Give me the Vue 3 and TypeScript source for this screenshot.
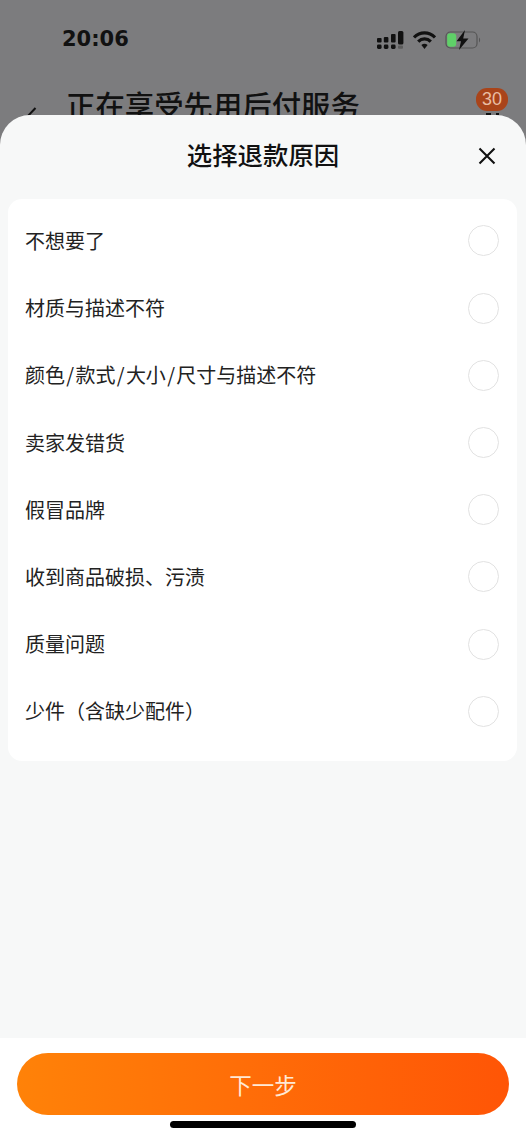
<script setup lang="ts">
const reasons: string[] = [
  '不想要了',
  '材质与描述不符',
  '颜色/款式/大小/尺寸与描述不符',
  '卖家发错货',
  '假冒品牌',
  '收到商品破损、污渍',
  '质量问题',
  '少件（含缺少配件）',
]
</script>

<template>
  <div class="page">
    <div class="behind">
      <div class="status">
        <span class="time">20:06</span>
        <div class="status-icons">
          <svg class="signal" width="27" height="18" viewBox="0 0 27 18">
            <g fill="#111">
              <rect x="0" y="7" width="4.6" height="4.4" rx="1" />
              <rect x="0" y="13.6" width="4.6" height="4.4" rx="1.4" />
              <rect x="6.8" y="6" width="4.6" height="5.4" rx="1" />
              <rect x="6.8" y="13.6" width="4.6" height="4.4" rx="1.4" />
              <rect x="14" y="3" width="4.6" height="8.4" rx="1" />
              <rect x="14" y="13.6" width="4.6" height="4.4" rx="1.4" />
              <rect x="21" y="0" width="5.4" height="13.6" rx="1.5" />
            </g>
            <rect x="21" y="14.6" width="5" height="3.2" rx="1" fill="#5c5c5c" />
          </svg>
          <svg class="wifi" width="23" height="18" viewBox="0 0 23 18">
            <path d="M1 6.4 C7 0.4 16 0.4 22 6.4" fill="none" stroke="#111" stroke-width="3.2" />
            <path d="M5.2 10.6 C8.8 7 14.2 7 17.8 10.6" fill="none" stroke="#111" stroke-width="3.2" />
            <path d="M8.4 14 C10.4 12.4 12.6 12.4 14.6 14 L11.5 18 Z" fill="#111" />
          </svg>
          <svg class="battery" width="36" height="20" viewBox="0 0 36 20">
            <rect x="1" y="2" width="31" height="16" rx="4.5" fill="none" stroke="#555" stroke-width="1.2" />
            <rect x="2.2" y="3.2" width="9" height="13.6" rx="3" fill="#5fd068" />
            <path d="M34 7.5 C35.4 8.2 35.4 11.8 34 12.5 Z" fill="#555" />
            <path d="M20 0 L11.5 11.2 L16 11.2 L14 20 L23.5 8.4 L18.2 8.4 Z" fill="#111" />
          </svg>
        </div>
      </div>
      <div class="nav">
        <svg class="back" width="14" height="24" viewBox="0 0 14 24">
          <path d="M11.5 2 L2 12 L11.5 22" fill="none" stroke="#111" stroke-width="2" />
        </svg>
        <span class="nav-title">正在享受先用后付服务</span>
        <span class="badge">30</span>
        <span class="badge-icon"></span>
      </div>
    </div>

    <section class="sheet">
      <header class="sheet-head">
        <h1 class="sheet-title">选择退款原因</h1>
        <svg class="close" width="20" height="20" viewBox="0 0 20 20">
          <path d="M2.5 2.5 L17.5 17.5 M17.5 2.5 L2.5 17.5" fill="none" stroke="#111" stroke-width="2.1" />
        </svg>
      </header>

      <div class="sheet-body">
        <ul class="card">
          <li v-for="reason in reasons" :key="reason" class="row">
            <span class="label">
              <template v-for="(part, i) in reason.split('/')" :key="i"><span v-if="i" class="slash">/</span>{{ part }}</template>
            </span>
            <span class="radio"></span>
          </li>
        </ul>
      </div>

      <footer class="footer">
        <button class="next" type="button">下一步</button>
        <div class="home"></div>
      </footer>
    </section>
  </div>
</template>

<style>
html,
body {
  margin: 0;
  padding: 0;
  background: #7c7c7e;
}
</style>

<style scoped>
.page {
  width: 526px;
  height: 1139px;
  display: flex;
  flex-direction: column;
  background: #7c7c7e;
  overflow: hidden;
  font-family: "Noto Sans CJK SC", "Liberation Sans", sans-serif;
}

.behind {
  height: 115px;
  flex: none;
  overflow: hidden;
}

.status {
  height: 78px;
  display: flex;
  justify-content: space-between;
  align-items: flex-start;
  padding: 24px 45px 0 62px;
  box-sizing: border-box;
}

.time {
  font-family: "DejaVu Sans", sans-serif;
  font-size: 21px;
  line-height: 30px;
  font-weight: 700;
  color: #111;
}

.status-icons {
  display: flex;
  align-items: center;
  gap: 9px;
  padding-top: 6px;
}

.nav {
  position: relative;
  display: flex;
  align-items: flex-start;
  padding-left: 24px;
}

.back {
  margin-top: 28px;
  flex: none;
}

.nav-title {
  margin: 6px 0 0 28px;
  font-size: 29.4px;
  line-height: 40px;
  font-weight: 500;
  color: #111;
  white-space: nowrap;
}

.badge {
  position: absolute;
  top: 10px;
  left: 476px;
  width: 32px;
  height: 23px;
  border-radius: 11px;
  background: #a9441a;
  color: #e9bda4;
  font-family: "Liberation Sans", sans-serif;
  font-size: 18px;
  line-height: 23px;
  text-align: center;
}

.badge-icon {
  position: absolute;
  top: 35px;
  left: 486px;
  width: 13px;
  height: 3px;
  background: linear-gradient(90deg, #111 0 35%, transparent 35% 80%, #111 80%);
}

.sheet {
  flex: 1;
  min-height: 0;
  display: flex;
  flex-direction: column;
  background: #f7f8f8;
  border-radius: 30px 30px 0 0;
  overflow: hidden;
}

.sheet-head {
  position: relative;
  height: 84px;
  flex: none;
  display: flex;
  align-items: flex-start;
  justify-content: center;
}

.sheet-title {
  margin: 21px 0 0;
  font-size: 25.4px;
  line-height: 36px;
  font-weight: 500;
  color: #111;
}

.close {
  position: absolute;
  top: 31px;
  right: 29px;
}

.sheet-body {
  flex: 1;
  min-height: 0;
  padding: 0 9px 0 8px;
}

.card {
  margin: 0;
  padding: 8.4px 0 16.6px;
  list-style: none;
  background: #fff;
  border-radius: 14px;
}

.row {
  height: 67.2px;
  display: flex;
  align-items: center;
  justify-content: space-between;
  padding: 0 18px 0 17px;
}

.label {
  font-size: 20px;
  line-height: 28px;
  color: #222;
}

.slash {
  padding: 0 1.3px;
}

.radio {
  width: 29px;
  height: 29px;
  border: 1.5px solid #e2e2e2;
  border-radius: 50%;
  flex: none;
}

.footer {
  height: 101px;
  flex: none;
  display: flex;
  flex-direction: column;
  align-items: center;
  background: #fff;
  padding-top: 15px;
  box-sizing: border-box;
}

.next {
  width: 492px;
  height: 62px;
  flex: none;
  border: 0;
  border-radius: 31px;
  background: linear-gradient(90deg, #ff8208 0%, #ff6e08 45%, #ff5506 100%);
  color: #ffe9d6;
  font-family: inherit;
  font-size: 22.5px;
  padding: 0;
}

.home {
  width: 186px;
  height: 7px;
  margin-top: 6px;
  border-radius: 4px;
  background: #000;
}
</style>
